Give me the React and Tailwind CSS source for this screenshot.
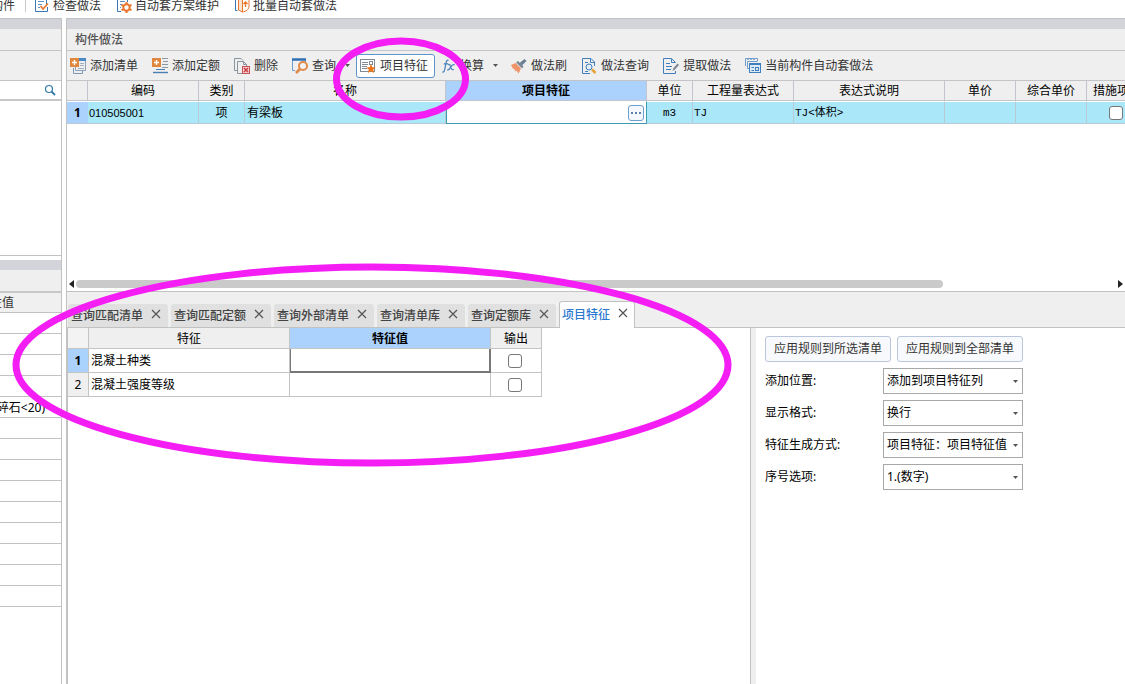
import { useState } from "react";

const FONT = "font-['Noto_Sans','Noto_Sans_CJK_SC',sans-serif]";

const TABS = [
  "查询匹配清单",
  "查询匹配定额",
  "查询外部清单",
  "查询清单库",
  "查询定额库",
  "项目特征",
];

const SETTINGS = [
  { id: "position", label: "添加位置:", options: ["添加到项目特征列"] },
  { id: "format", label: "显示格式:", options: ["换行"] },
  { id: "mode", label: "特征生成方式:", options: ["项目特征：项目特征值"] },
  { id: "index", label: "序号选项:", options: ["1.(数字)"] },
];

const FEATURES = ["混凝土种类", "混凝土强度等级"];

const PROPERTY_ROWS = ["", "", "", "", "碎石<20)", "", "", "", "", "", "", "", "", ""];

function Svg({ children, className = "w-4" }) {
  return (
    <svg
      viewBox="0 0 16 16"
      fill="none"
      className={`h-4 shrink-0 ${className}`}
      aria-hidden="true"
    >
      {children}
    </svg>
  );
}

function CheckDocIcon() {
  return (
    <Svg>
      <path d="M6 13.500H1.500V.500H12.500V6" stroke="#3b78b5" />
      <path d="M4 3.500H10M4 6.500H8M4 9.500H6" stroke="#5f93c6" />
      <path d="M13.500 9V13.500H5" stroke="#3b78b5" />
      <path d="M6.500 8L9 11L14 5.500" stroke="#e8762c" strokeWidth="1.600" />
    </Svg>
  );
}

function GearDocIcon() {
  return (
    <Svg>
      <path d="M5 13.500H1.500V.500H11.500V4" stroke="#3b78b5" />
      <path d="M4 3.500H9M4 6.500H6M4 9.500H5" stroke="#5f93c6" />
      <circle cx="10.500" cy="9.500" r="3.200" stroke="#e8762c" strokeWidth="2" />
      <path
        d="M10.500 4V6M10.500 13V15M5.500 6.800L7.200 7.700M13.800 11.300L15.500 12.200M5.500 12.200L7.200 11.300M13.800 7.700L15.500 6.800"
        stroke="#e8762c"
        strokeWidth="2"
      />
    </Svg>
  );
}

function BatchIcon() {
  return (
    <Svg>
      <path d="M3.500 12.500H1.500V.500H5" stroke="#3b78b5" />
      <path d="M4.500 1.500H8.500V14L4.500 12Z" stroke="#e8762c" fill="#fbe3d2" />
      <path d="M8.500 1.500H15V8C15 11.500 12 13.500 8.500 14" stroke="#e8762c" />
      <path d="M11.500 9V4M9.500 6L11.500 4L13.500 6" stroke="#e8762c" strokeWidth="1.300" />
    </Svg>
  );
}

function AddListIcon() {
  return (
    <Svg>
      <path d="M8 2.500H15.500V12.500H5.500V9" stroke="#8aa1b8" />
      <path d="M9 1.500H16" stroke="#4a8ac9" strokeWidth="3" />
      <path d="M3.500 10V15.500H12.500V13" stroke="#7d98b4" />
      <path d="M10 5.500H14M10 7.500H14M8 10.500H14" stroke="#9fb0c2" />
      <rect width="9" height="9" fill="#e0873d" />
      <path d="M4.500 2V7M2 4.500H7" stroke="#fff" strokeWidth="1.400" />
    </Svg>
  );
}

function AddQuotaIcon() {
  return (
    <Svg>
      <path d="M10 .500H16M11 3.500H16M10 6.500H16M10 9.500H16" stroke="#8b98a6" />
      <path d="M4 11.500H13" stroke="#4a7fb5" />
      <path d="M1 14.500H16" stroke="#4a7fb5" strokeWidth="1.400" />
      <rect width="9" height="9" fill="#e0873d" />
      <path d="M4.500 2V7M2 4.500H7" stroke="#fff" strokeWidth="1.400" />
    </Svg>
  );
}

function DeleteIcon() {
  return (
    <Svg>
      <path d="M3 12.500H.500V.500H7L9 2.500" stroke="#8b95a0" />
      <path d="M8 15.500H3.500V3.500H9.500L12.500 6.500V8" stroke="#8b95a0" />
      <path d="M9.500 3.500V6.500H12.500" stroke="#8b95a0" />
      <rect x="8.500" y="8.500" width="7" height="7" fill="#f5cfd0" stroke="#c85257" />
      <path d="M10 10L14 14M14 10L10 14" stroke="#c9353b" strokeWidth="1.300" />
    </Svg>
  );
}

function QueryIcon() {
  return (
    <Svg>
      <path d="M3 12.500H.500V1.500H13.500V4" stroke="#6b9fd3" />
      <path d="M0 1.500H14" stroke="#2f6fb3" strokeWidth="2.500" />
      <circle cx="11" cy="8" r="4" stroke="#e08a4a" strokeWidth="2" fill="#f4f4f4" />
      <path d="M8 11L4 15" stroke="#e08a4a" strokeWidth="2.600" />
    </Svg>
  );
}

function FeatureIcon() {
  return (
    <Svg>
      <rect x=".500" y="1.500" width="14" height="12" fill="#fff" stroke="#7f8b98" />
      <path d="M2 4.500H8M2 6.500H8M2 8.500H7M2 10.500H7" stroke="#7f8b98" />
      <rect x="9.500" y="3.500" width="3" height="3" stroke="#7f8b98" />
      <path
        d="M11 6L12.300 9.200L15.800 9.400L13.200 11.600L14 15L11 13.200L8 15L8.800 11.600L6.200 9.400L9.700 9.200Z"
        fill="#ef7418"
      />
    </Svg>
  );
}

function FxIcon() {
  return (
    <Svg className="w-3.5">
      <path
        d="M7.500 1.500C5.500 .800 5 2.500 4.500 5L3 12.500C2.600 14.500 1.800 15.200 .300 14.800M2 5.500H7"
        stroke="#4b83bd"
        strokeWidth="1.400"
      />
      <path
        d="M7 6.500C9 5.500 9.500 7 10 9S11 13 13.500 12M14.500 6.500C12 6 10.500 8 9.800 9.500S8 13 6 12.200"
        stroke="#4b83bd"
        strokeWidth="1.400"
      />
    </Svg>
  );
}

function BrushIcon() {
  return (
    <Svg>
      <path d="M0 7L4.500 5L10 10.500L7.500 15.500L5.500 12.500L4.500 13.500L3 10.500L2 11Z" fill="#ee9468" />
      <path d="M5 4.500L7 3L12.500 8.500L11 10.500Z" fill="#7b8895" />
      <path d="M8.500 5L13.500 1L15.500 3L11 7.500Z" fill="#6b7f94" />
    </Svg>
  );
}

function DocSearchIcon() {
  return (
    <Svg>
      <path d="M9 15.500H1.500V.500H10L13.500 4V8" stroke="#3f7fbd" />
      <path d="M9.500 1V4.500H13" stroke="#3f7fbd" />
      <path d="M4 4.500H7M4 13.500H7" stroke="#3f7fbd" />
      <circle cx="8" cy="9" r="3" stroke="#3f7fbd" fill="#e4eef8" />
      <path d="M11 11.500L14.500 15" stroke="#e8a33c" strokeWidth="2.600" />
    </Svg>
  );
}

function ExtractIcon() {
  return (
    <Svg>
      <path d="M12.500 13V15.500H.500V.500H8.500L12.500 4.500V5" stroke="#3f7fbd" />
      <path d="M8.500 1V4.500H12" stroke="#3f7fbd" />
      <path d="M3 5.500H7M3 8.500H9M3 11.500H8" stroke="#3f7fbd" />
      <path d="M9.500 13L10.500 10L14.500 5.500L16 7L12 11.500Z" fill="#7d8893" />
    </Svg>
  );
}

function AutoIcon() {
  return (
    <Svg>
      <path d="M4 10.500H2.500V3.500M.500 8V.500H12.500V3M2.500 3.500H12.500" stroke="#6f9dcc" />
      <path d="M2 1.500H11" stroke="#8db2d8" strokeDasharray="2 1" />
      <rect x="4.500" y="5.500" width="11" height="9" fill="#dce9f6" stroke="#3f7fbd" />
      <path d="M5 6.500H15" stroke="#3f7fbd" />
      <path d="M6.500 9.500H9M6.500 12.500H9" stroke="#3f7fbd" />
      <rect x="10.500" y="9.500" width="3" height="3" stroke="#3f7fbd" />
    </Svg>
  );
}

function Caret({ className = "" }) {
  return (
    <svg viewBox="0 0 5 3" className={`h-[3px] w-[5px] shrink-0 ${className}`} aria-hidden="true">
      <path d="M0 0H5L2.500 3Z" fill="#555" />
    </svg>
  );
}

const TOOLS = [
  { label: "添加清单", Icon: AddListIcon },
  { label: "添加定额", Icon: AddQuotaIcon },
  { label: "删除", Icon: DeleteIcon },
  { label: "查询", Icon: QueryIcon, menu: true },
  { label: "项目特征", Icon: FeatureIcon, active: true },
  { label: "换算", Icon: FxIcon, menu: true },
  { label: "做法刷", Icon: BrushIcon },
  { label: "做法查询", Icon: DocSearchIcon },
  { label: "提取做法", Icon: ExtractIcon },
  { label: "当前构件自动套做法", Icon: AutoIcon },
];

function TopBar() {
  return (
    <header className="flex h-[18px] items-start bg-white leading-[11px] text-[#333]">
      <button className="flex h-[11px] w-[15px] shrink-0 items-center justify-end whitespace-nowrap">
        构件
      </button>
      <span className="ml-2.5 h-3 w-px shrink-0 bg-[#c8c8c8]" />
      <div className="ml-2 flex h-[11px] items-center gap-[15px] whitespace-nowrap">
        <button className="flex items-center gap-[3px]">
          <CheckDocIcon />
          检查做法
        </button>
        <button className="flex items-center gap-[3px]">
          <GearDocIcon />
          自动套方案维护
        </button>
        <button className="flex items-center gap-[3px]">
          <BatchIcon />
          批量自动套做法
        </button>
      </div>
    </header>
  );
}

function Sidebar() {
  return (
    <aside className="flex w-[62px] shrink-0 flex-col border-r border-[#c2c2c2]">
      <div className="h-[11px] border-t border-[#c0c1c5] bg-[#d2d4da]" />
      <div className="h-[22px] border-b border-[#c4c4c8] bg-[#efefef]" />
      <div className="h-[30px] border-b border-[#c4c4c8] bg-[#efefef]" />
      <label className="flex h-5 items-center border-b-2 border-[#c8c8c8] pr-[5px]">
        <input
          type="text"
          aria-label="搜索"
          className="min-w-0 flex-1 bg-transparent outline-none"
        />
        <svg viewBox="0 0 12 12" fill="none" className="h-3 w-3" aria-hidden="true">
          <circle cx="5" cy="5" r="3.500" stroke="#3079a8" strokeWidth="1.200" />
          <path d="M7.500 7.500L11 11" stroke="#3079a8" strokeWidth="1.800" />
        </svg>
      </label>
      <div className="h-[155px] border-b border-[#c2c2c2]" />
      <div className="mt-1 h-[10px] bg-[#d2d4da]" />
      <div className="h-[23px] border-b-2 border-[#c8c8c8] bg-[#efefef]" />
      <table className="w-full table-fixed border-separate border-spacing-0">
        <thead>
          <tr>
            <th className="h-5 border-b border-[#c2c2c2] bg-[#f0f0f0] p-0 pt-px font-normal">
              <div className="flex w-[14px] justify-end whitespace-nowrap leading-4 text-[#333]">
                性值
              </div>
            </th>
          </tr>
        </thead>
        <tbody>
          {PROPERTY_ROWS.map((value, i) => (
            <tr key={i}>
              <td className="h-[21px] border-b border-[#c2c2c2] p-0 pt-px">
                <div className="flex w-[45px] justify-end whitespace-nowrap leading-4">
                  {value}
                </div>
              </td>
            </tr>
          ))}
        </tbody>
      </table>
    </aside>
  );
}

function Toolbar() {
  return (
    <div className="flex h-[30px] items-center overflow-hidden border-b border-[#c4c4c8] bg-[#efefef] text-[#333]">
      <div className="-ml-1 flex items-center">
        {TOOLS.map(({ label, Icon, menu, active }) => (
          <button
            key={label}
            className={`flex h-6 shrink-0 items-center gap-1 whitespace-nowrap ${
              active
                ? "rounded-[3px] border border-[#5c94cc] bg-white pr-1.5 pl-[3px]"
                : menu
                  ? "pr-1.5 pl-[7px]"
                  : "px-[7px]"
            }`}
          >
            <Icon />
            {label}
            {menu && <Caret className="ml-[5px]" />}
          </button>
        ))}
      </div>
    </div>
  );
}

function ItemTable() {
  const th = "h-5 border-r border-b border-[#c4c4cc] bg-[#efefef] p-0 pt-px font-normal whitespace-nowrap";
  const td = "h-[23px] border-t border-r border-b border-t-white border-r-[#b6cbd6] border-b-[#b6cbd6] bg-[#a9e7f9] p-0";
  return (
    <div className="min-h-[198px] overflow-hidden">
      <table className="w-[1120px] table-fixed border-separate border-spacing-0 leading-4 text-black">
        <colgroup>
          <col className="w-[21px]" />
          <col className="w-[111px]" />
          <col className="w-[46px]" />
          <col className="w-[201px]" />
          <col className="w-[201px]" />
          <col className="w-[46px]" />
          <col className="w-[101px]" />
          <col className="w-[151px]" />
          <col className="w-[71px]" />
          <col className="w-[71px]" />
          <col />
        </colgroup>
        <thead>
          <tr>
            <th className={th}></th>
            <th className={th}>编码</th>
            <th className={th}>类别</th>
            <th className={th}>名称</th>
            <th className="h-5 border-r border-b border-[#c4c4cc] bg-[#abd2fc] p-0 pt-px font-bold">
              项目特征
            </th>
            <th className={th}>单位</th>
            <th className={th}>工程量表达式</th>
            <th className={th}>表达式说明</th>
            <th className={th}>单价</th>
            <th className={th}>综合单价</th>
            <th className={`${th} pl-1.5 text-left`}>措施项目</th>
          </tr>
        </thead>
        <tbody>
          <tr>
            <th className="h-[23px] border-t border-b border-t-white border-b-[#b6cbd6] bg-[#abd2fc] p-0 font-bold">
              1
            </th>
            <td className={`${td} pl-px font-['Liberation_Sans',sans-serif] text-[11px]`}>
              010505001
            </td>
            <td className={`${td} text-center`}>项</td>
            <td className={`${td} pl-0.5`}>有梁板</td>
            <td className="h-[23px] border border-[#3d9cb0] border-t-white bg-white p-0">
              <div className="flex items-center pr-0.5">
                <input
                  type="text"
                  aria-label="项目特征"
                  className="h-4 min-w-0 flex-1 bg-transparent px-1 outline-none"
                />
                <button
                  aria-label="更多"
                  className="flex h-4 w-4 items-center justify-center gap-0.5 rounded-[3px] border border-[#6ba0d2] bg-[#f4f8fd]"
                >
                  <span className="h-0.5 w-0.5 bg-[#5b7fa6]" />
                  <span className="h-0.5 w-0.5 bg-[#5b7fa6]" />
                  <span className="h-0.5 w-0.5 bg-[#5b7fa6]" />
                </button>
              </div>
            </td>
            <td className={`${td} text-center font-['Liberation_Mono',monospace] text-[11px]`}>
              m3
            </td>
            <td className={`${td} pl-px font-['Liberation_Mono',monospace] text-[11px]`}>
              TJ
            </td>
            <td className={`${td} pl-px font-['Liberation_Mono','Noto_Sans_CJK_SC',monospace] text-[11px]`}>
              TJ&lt;体积&gt;
            </td>
            <td className={td}></td>
            <td className={td}></td>
            <td className={`${td} pl-[22px]`}>
              <Tick label="措施项目" />
            </td>
          </tr>
        </tbody>
      </table>
    </div>
  );
}

function Tick({ label }) {
  return (
    <input
      type="checkbox"
      aria-label={label}
      className="block h-3.5 w-3.5 appearance-none rounded-[3px] border border-[#777] bg-white checked:bg-[#5c94cc]"
    />
  );
}

function ScrollTrack() {
  return (
    <div className="flex h-[13px] items-center border-b border-[#c2c2c2] px-0.5 pb-0.5">
      <svg viewBox="0 0 5 8" className="h-2 w-[5px]" aria-hidden="true">
        <path d="M5 0V8L0 4Z" fill="#222" />
      </svg>
      <div className="mx-0.5 flex-1">
        <div className="h-2 w-5/6 rounded-full bg-[#cacaca]" />
      </div>
      <svg viewBox="0 0 5 8" className="h-2 w-[5px]" aria-hidden="true">
        <path d="M0 0V8L5 4Z" fill="#222" />
      </svg>
    </div>
  );
}

function TabStrip({ current, onSelect }) {
  return (
    <div className="flex h-9 items-end gap-[3px] border-b border-[#c2c2c2] bg-[#efefef] pl-px">
      {TABS.map((tab) => (
        <div
          key={tab}
          className={
            tab === current
              ? "-mb-px flex h-[27px] shrink-0 items-center gap-2 rounded-t-[3px] border border-b-0 border-[#c2c2c2] bg-white pr-1.5 pl-0.5 font-medium text-[#2b78d0]"
              : "flex h-[23px] shrink-0 items-center gap-2 rounded-t-[3px] bg-[#e0e0e0] pr-[7px] pl-[3px] font-medium text-[#444]"
          }
        >
          <button onClick={() => onSelect(tab)} className="whitespace-nowrap leading-4">
            {tab}
          </button>
          <button aria-label={`关闭${tab}`} className="pb-1">
            <svg viewBox="0 0 10 10" className="h-2.5 w-2.5" aria-hidden="true">
              <path d="M1 1L9 9M9 1L1 9" stroke="#555" strokeWidth="1.200" />
            </svg>
          </button>
        </div>
      ))}
    </div>
  );
}

function FeatureTable() {
  const th = "h-[21px] border-r border-b border-[#c4c4c4] p-0 pt-px";
  return (
    <table className="w-[474px] table-fixed border-separate border-spacing-0 leading-4 text-black">
      <colgroup>
        <col className="w-[21px]" />
        <col className="w-[201px]" />
        <col className="w-[201px]" />
        <col className="w-[51px]" />
      </colgroup>
      <thead>
        <tr>
          <th className={`${th} bg-[#f3f3f3]`}></th>
          <th className={`${th} bg-[#efefef] font-normal`}>特征</th>
          <th className={`${th} bg-[#abd2fc] font-bold`}>特征值</th>
          <th className={`${th} bg-[#efefef] font-normal`}>输出</th>
        </tr>
      </thead>
      <tbody>
        {FEATURES.map((name, i) => (
          <tr key={name}>
            <th
              className={`h-6 border-r border-b border-[#c4c4c4] p-0 ${
                i === 0 ? "bg-[#abd2fc] font-bold" : "bg-[#efefef] font-normal"
              }`}
            >
              {i + 1}
            </th>
            <td className="h-6 border-r border-b border-[#c4c4c4] p-0 pl-0.5">{name}</td>
            <td
              className={`h-6 p-0 ${
                i === 0
                  ? "border-r-2 border-b-2 border-l border-[#777]"
                  : "border-r border-b border-[#c4c4c4]"
              }`}
            >
              <input
                type="text"
                aria-label={`${name}特征值`}
                className="block h-5 w-full bg-transparent px-1 outline-none"
              />
            </td>
            <td className="h-6 border-r border-b border-[#c4c4c4] p-0 pl-[17px]">
              <Tick label={`${name}输出`} />
            </td>
          </tr>
        ))}
      </tbody>
    </table>
  );
}

function SettingsPanel() {
  const btn = "h-[26px] w-[126px] rounded-[3px] border border-[#b9c6dc] bg-[#f8f9fc] whitespace-nowrap text-[#333]";
  return (
    <section className="min-w-0 flex-[360] pt-2 pl-[9px] text-black">
      <div className="flex gap-1.5">
        <button className={btn}>应用规则到所选清单</button>
        <button className={btn}>应用规则到全部清单</button>
      </div>
      {SETTINGS.map(({ id, label, options }) => (
        <div key={id} className="mt-1.5 flex items-center">
          <label htmlFor={id} className="w-[118px] shrink-0">
            {label}
          </label>
          <div className="relative w-[140px]">
            <select
              id={id}
              className="block h-[26px] w-full appearance-none border border-[#a8a8a8] bg-white pl-[3px] outline-none"
            >
              {options.map((option) => (
                <option key={option}>{option}</option>
              ))}
            </select>
            <Caret className="pointer-events-none absolute top-3 right-[5px]" />
          </div>
        </div>
      ))}
    </section>
  );
}

// Marker rings around the toolbar button and the lower pane
function Highlights() {
  return (
    <svg
      className="pointer-events-none absolute top-0 left-0 h-[684px] w-[1125px]"
      viewBox="0 0 1125 684"
      fill="none"
      stroke="#f41ef4"
      strokeWidth="7"
      aria-hidden="true"
    >
      <ellipse cx="401" cy="79" rx="64.500" ry="38" />
      <ellipse cx="372" cy="365" rx="356" ry="98" />
    </svg>
  );
}

export default function App() {
  const [tab, setTab] = useState("项目特征");

  return (
    <div className={`relative flex min-h-screen flex-col overflow-hidden bg-white text-xs ${FONT}`}>
      <TopBar />
      <div className="flex flex-1">
        <Sidebar />
        <main className="ml-1 flex min-w-0 flex-1 flex-col border-l border-[#c2c2c2]">
          <div className="h-[11px] border-t border-[#c0c1c5] bg-[#d2d4da]" />
          <h1 className="flex h-[22px] items-center border-b border-[#c4c4c8] bg-[#efefef] pt-px pl-2 font-medium text-[#555]">
            构件做法
          </h1>
          <Toolbar />
          <ItemTable />
          <ScrollTrack />
          <TabStrip current={tab} onSelect={setTab} />
          <div className="flex flex-1">
            <section className="min-w-0 flex-[682] border-r border-l border-[#c2c2c2]">
              <FeatureTable />
            </section>
            <div className="w-[5px] shrink-0 bg-[#efefef]" />
            <SettingsPanel />
          </div>
        </main>
      </div>
      <Highlights />
    </div>
  );
}
